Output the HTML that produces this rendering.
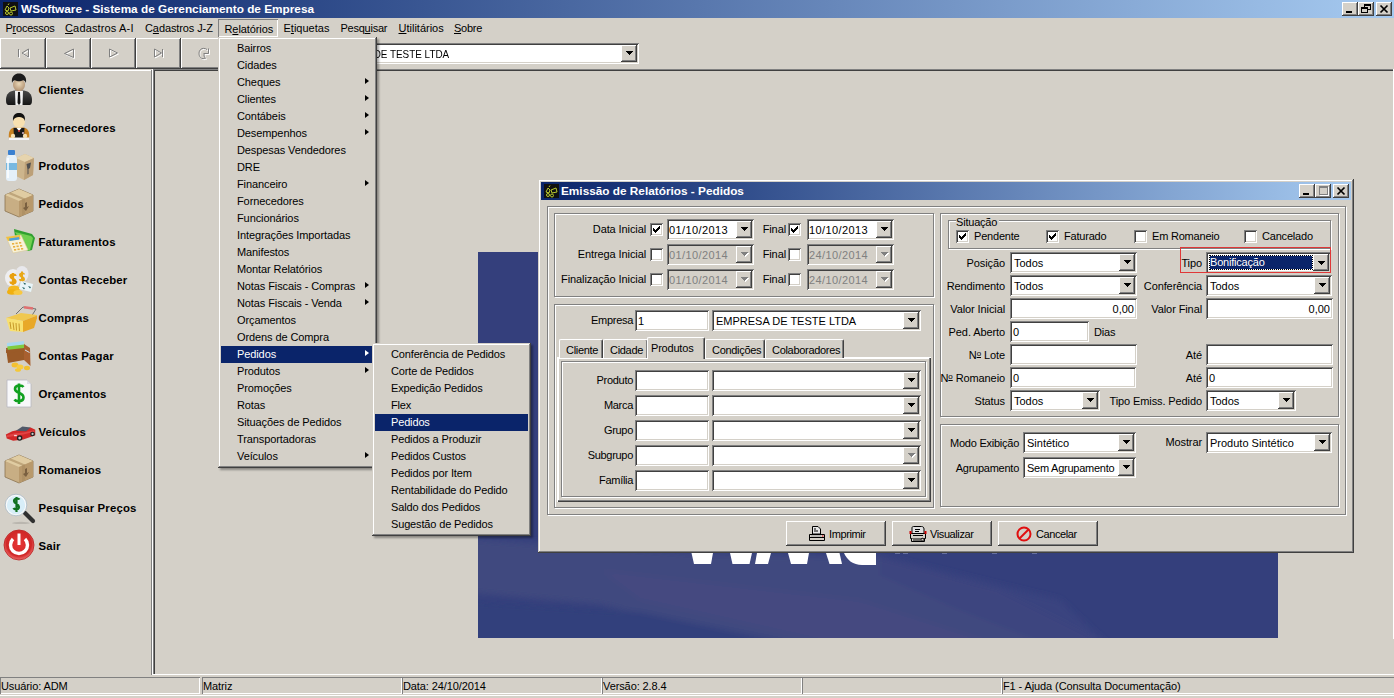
<!DOCTYPE html>
<html><head><meta charset="utf-8"><style>
html,body{margin:0;padding:0;width:1394px;height:698px;overflow:hidden;background:#D4D0C8}
body{position:relative;font-family:"Liberation Sans",sans-serif;font-size:11px;color:#000}
div,span,svg{position:absolute}
span{white-space:pre;line-height:13px}
u{text-decoration:underline;text-underline-offset:1px}
</style></head><body>
<div style="left:0px;top:0px;width:1394px;height:698px;background:#D4D0C8;"></div>
<div style="left:0px;top:0px;width:1394px;height:18px;background:linear-gradient(to right,#0A246A,#A6CAF0);"></div>
<div style="left:3px;top:2px;width:15px;height:14px"><svg width="15" height="14" viewBox="0 0 15 14"><rect width="15" height="14" fill="#101010"/><g fill="none" stroke="#B8C830" stroke-width="1"><path d="M2 8 L4 4 L6 6 L5 9 Z"/><path d="M7 6 L12 4 L13 8 L8 9 Z"/><circle cx="4" cy="11" r="1.5"/><circle cx="8" cy="11.5" r="1.5"/><path d="M5 3 L6 1.5"/></g></svg></div>
<span style="left:21px;top:3px;font-size:11.8px;font-weight:700;color:#fff;letter-spacing:0px;">WSoftware - Sistema de Gerenciamento de Empresa</span>
<div style="left:1342px;top:2px;width:16px;height:14px;background:#D4D0C8;box-shadow:inset -1px -1px #404040,inset 1px 1px #fff,inset -2px -2px #808080,inset 2px 2px #D4D0C8;"></div>
<div style="left:1346px;top:11px;width:6px;height:2px;background:#000;"></div>
<div style="left:1358px;top:2px;width:16px;height:14px;background:#D4D0C8;box-shadow:inset -1px -1px #404040,inset 1px 1px #fff,inset -2px -2px #808080,inset 2px 2px #D4D0C8;"></div>
<div style="left:1364px;top:4px;width:7px;height:6px;border:1px solid #000;border-top-width:2px;box-sizing:border-box"></div>
<div style="left:1361px;top:7px;width:7px;height:6px;border:1px solid #000;border-top-width:2px;box-sizing:border-box;background:#D4D0C8"></div>
<div style="left:1376px;top:2px;width:16px;height:14px;background:#D4D0C8;box-shadow:inset -1px -1px #404040,inset 1px 1px #fff,inset -2px -2px #808080,inset 2px 2px #D4D0C8;"></div>
<svg style="position:absolute;left:1376px;top:2px" width="16" height="14"><path d="M4.5 3.5 L11.5 10.5 M11.5 3.5 L4.5 10.5" stroke="#000" stroke-width="1.7"/></svg>
<div style="left:218px;top:19px;width:60px;height:18px;background:transparent;box-shadow:inset 1px 1px #808080,inset -1px -1px #fff;"></div>
<span style="left:5.5px;top:22px;font-size:11px;font-weight:400;color:#000;letter-spacing:-0.25px;">P<u>r</u>ocessos</span>
<span style="left:65px;top:22px;font-size:11px;font-weight:400;color:#000;letter-spacing:0.15px;"><u>C</u>adastros A-I</span>
<span style="left:145px;top:22px;font-size:11px;font-weight:400;color:#000;letter-spacing:-0.1px;">C<u>a</u>dastros J-Z</span>
<span style="left:224.5px;top:23px;font-size:11px;font-weight:400;color:#000;letter-spacing:-0.1px;">R<u>e</u>latórios</span>
<span style="left:283.5px;top:22px;font-size:11px;font-weight:400;color:#000;letter-spacing:0px;">E<u>t</u>iquetas</span>
<span style="left:340.5px;top:22px;font-size:11px;font-weight:400;color:#000;letter-spacing:-0.25px;">Pesq<u>u</u>isar</span>
<span style="left:398.5px;top:22px;font-size:11px;font-weight:400;color:#000;letter-spacing:0px;"><u>U</u>tilitários</span>
<span style="left:454px;top:22px;font-size:11px;font-weight:400;color:#000;letter-spacing:-0.25px;"><u>S</u>obre</span>
<div style="left:0px;top:38px;width:46px;height:31px;background:#D4D0C8;box-shadow:inset -1px -1px #404040,inset 1px 1px #fff,inset -2px -2px #808080,inset 2px 2px #D4D0C8;"></div>
<div style="left:46px;top:38px;width:45px;height:31px;background:#D4D0C8;box-shadow:inset -1px -1px #404040,inset 1px 1px #fff,inset -2px -2px #808080,inset 2px 2px #D4D0C8;"></div>
<div style="left:91px;top:38px;width:45px;height:31px;background:#D4D0C8;box-shadow:inset -1px -1px #404040,inset 1px 1px #fff,inset -2px -2px #808080,inset 2px 2px #D4D0C8;"></div>
<div style="left:136px;top:38px;width:45px;height:31px;background:#D4D0C8;box-shadow:inset -1px -1px #404040,inset 1px 1px #fff,inset -2px -2px #808080,inset 2px 2px #D4D0C8;"></div>
<div style="left:181px;top:38px;width:45px;height:31px;background:#D4D0C8;box-shadow:inset -1px -1px #404040,inset 1px 1px #fff,inset -2px -2px #808080,inset 2px 2px #D4D0C8;"></div>
<div style="left:305px;top:43px;width:334px;height:21px;background:#fff;box-shadow:inset 1px 1px #808080,inset -1px -1px #fff,inset 2px 2px #404040,inset -2px -2px #D4D0C8;"></div>
<div style="left:621px;top:45px;width:16px;height:17px;background:#D4D0C8;box-shadow:inset -1px -1px #404040,inset 1px 1px #fff,inset -2px -2px #808080,inset 2px 2px #D4D0C8;"></div>
<svg style="left:626px;top:51px" width="7" height="4" shape-rendering="crispEdges"><g fill="#000"><rect x="0" y="0" width="7" height="1"/><rect x="1" y="1" width="5" height="1"/><rect x="2" y="2" width="3" height="1"/><rect x="3" y="3" width="1" height="1"/></g></svg>
<span style="right:945px;top:48px;font-size:11px;font-weight:400;color:#000;letter-spacing:0px;transform:scaleX(0.9);transform-origin:right">EMPRESA DE TESTE LTDA</span>
<div style="left:0px;top:70px;width:151px;height:1px;background:#fff;"></div>
<div style="left:151px;top:70px;width:1px;height:605px;background:#808080;"></div>
<div style="left:152px;top:69px;width:1px;height:606px;background:#fff;"></div>
<div style="left:153px;top:69px;width:1241px;height:1px;background:#808080;"></div>
<div style="left:153px;top:69px;width:1px;height:605px;background:#808080;"></div>
<div style="left:154px;top:70px;width:1240px;height:1px;background:#404040;"></div>
<div style="left:154px;top:70px;width:1px;height:604px;background:#404040;"></div>
<div style="left:152px;top:674px;width:1242px;height:1px;background:#fff;"></div>
<div style="left:1393px;top:69px;width:1px;height:570px;background:#fff;"></div>
<span style="left:38.5px;top:84px;font-size:11.4px;font-weight:700;color:#000;letter-spacing:0.15px;">Clientes</span>
<span style="left:38.5px;top:122px;font-size:11.4px;font-weight:700;color:#000;letter-spacing:0.15px;">Fornecedores</span>
<span style="left:38.5px;top:160px;font-size:11.4px;font-weight:700;color:#000;letter-spacing:0.15px;">Produtos</span>
<span style="left:38.5px;top:198px;font-size:11.4px;font-weight:700;color:#000;letter-spacing:0.15px;">Pedidos</span>
<span style="left:38.5px;top:236px;font-size:11.4px;font-weight:700;color:#000;letter-spacing:0.15px;">Faturamentos</span>
<span style="left:38.5px;top:274px;font-size:11.4px;font-weight:700;color:#000;letter-spacing:0.15px;">Contas Receber</span>
<span style="left:38.5px;top:312px;font-size:11.4px;font-weight:700;color:#000;letter-spacing:0.15px;">Compras</span>
<span style="left:38.5px;top:350px;font-size:11.4px;font-weight:700;color:#000;letter-spacing:0.15px;">Contas Pagar</span>
<span style="left:38.5px;top:388px;font-size:11.4px;font-weight:700;color:#000;letter-spacing:0.15px;">Orçamentos</span>
<span style="left:38.5px;top:426px;font-size:11.4px;font-weight:700;color:#000;letter-spacing:0.15px;">Veículos</span>
<span style="left:38.5px;top:464px;font-size:11.4px;font-weight:700;color:#000;letter-spacing:0.15px;">Romaneios</span>
<span style="left:38.5px;top:502px;font-size:11.4px;font-weight:700;color:#000;letter-spacing:0.15px;">Pesquisar Preços</span>
<span style="left:38.5px;top:540px;font-size:11.4px;font-weight:700;color:#000;letter-spacing:0.15px;">Sair</span>
<svg style="left:478px;top:252px" width="800" height="386" viewBox="478 252 800 386"><defs><filter id="bl" x="-10%" y="-10%" width="120%" height="120%"><feGaussianBlur stdDeviation="3"/></filter><clipPath id="cp"><rect x="478" y="252" width="800" height="386"/></clipPath></defs><rect x="478" y="252" width="800" height="386" fill="#343F7C"/><g clip-path="url(#cp)"><g filter="url(#bl)"><path d="M460 538 L700 553 L880 556 L1000 590 L1110 645 L780 645 L600 605 L460 592 Z" fill="#41487F"/><path d="M600 570 L860 600 L1000 645 L840 645 L640 600 Z" fill="#474C80" opacity=".7"/><path d="M460 600 L640 612 L800 645 L460 645 Z" fill="#333F7C"/><path d="M880 556 L1060 600 L1108 645 L1050 645 L960 610 L880 575 Z" fill="#3B4380" opacity=".8"/></g></g></svg>
<div style="left:0px;top:677px;width:200px;height:17px;background:transparent;box-shadow:inset 1px 1px #808080,inset -1px -1px #fff;"></div>
<span style="left:1px;top:680px;font-size:11px;font-weight:400;color:#000;letter-spacing:-0.1px;">Usuário: ADM</span>
<div style="left:202px;top:677px;width:200px;height:17px;background:transparent;box-shadow:inset 1px 1px #808080,inset -1px -1px #fff;"></div>
<span style="left:203px;top:680px;font-size:11px;font-weight:400;color:#000;letter-spacing:-0.1px;">Matriz</span>
<div style="left:402px;top:677px;width:200px;height:17px;background:transparent;box-shadow:inset 1px 1px #808080,inset -1px -1px #fff;"></div>
<span style="left:403px;top:680px;font-size:11px;font-weight:400;color:#000;letter-spacing:-0.1px;">Data: 24/10/2014</span>
<div style="left:602px;top:677px;width:200px;height:17px;background:transparent;box-shadow:inset 1px 1px #808080,inset -1px -1px #fff;"></div>
<span style="left:603px;top:680px;font-size:11px;font-weight:400;color:#000;letter-spacing:-0.1px;">Versão: 2.8.4</span>
<div style="left:802px;top:677px;width:200px;height:17px;background:transparent;box-shadow:inset 1px 1px #808080,inset -1px -1px #fff;"></div>
<div style="left:1002px;top:677px;width:393px;height:17px;background:transparent;box-shadow:inset 1px 1px #808080,inset -1px -1px #fff;"></div>
<span style="left:1003px;top:680px;font-size:11px;font-weight:400;color:#000;letter-spacing:-0.1px;">F1 - Ajuda (Consulta Documentação)</span>
<div style="left:0px;top:695px;width:1394px;height:1px;background:#fff;"></div>
<div style="left:538px;top:179px;width:816px;height:374px;background:#D4D0C8;box-shadow:inset -1px -1px #404040,inset 1px 1px #D4D0C8,inset -2px -2px #808080,inset 2px 2px #fff;"></div>
<div style="left:541px;top:182px;width:810px;height:18px;background:linear-gradient(to right,#0A246A,#A6CAF0);"></div>
<div style="left:544px;top:184px;width:15px;height:14px"><svg width="15" height="14" viewBox="0 0 15 14"><rect width="15" height="14" fill="#101010"/><g fill="none" stroke="#B8C830" stroke-width="1"><path d="M2 8 L4 4 L6 6 L5 9 Z"/><path d="M7 6 L12 4 L13 8 L8 9 Z"/><circle cx="4" cy="11" r="1.5"/><circle cx="8" cy="11.5" r="1.5"/><path d="M5 3 L6 1.5"/></g></svg></div>
<span style="left:561px;top:185px;font-size:11.8px;font-weight:700;color:#fff;letter-spacing:0px;">Emissão de Relatórios - Pedidos</span>
<div style="left:1299px;top:184px;width:16px;height:14px;background:#D4D0C8;box-shadow:inset -1px -1px #404040,inset 1px 1px #fff,inset -2px -2px #808080,inset 2px 2px #D4D0C8;"></div>
<div style="left:1303px;top:193px;width:6px;height:2px;background:#000;"></div>
<div style="left:1315px;top:184px;width:16px;height:14px;background:#D4D0C8;box-shadow:inset -1px -1px #404040,inset 1px 1px #fff,inset -2px -2px #808080,inset 2px 2px #D4D0C8;"></div>
<div style="left:1319px;top:186px;width:9px;height:9px;border:1px solid #808080;border-top-width:2px;box-sizing:border-box;box-shadow:1px 1px #fff"></div>
<div style="left:1333px;top:184px;width:16px;height:14px;background:#D4D0C8;box-shadow:inset -1px -1px #404040,inset 1px 1px #fff,inset -2px -2px #808080,inset 2px 2px #D4D0C8;"></div>
<svg style="position:absolute;left:1333px;top:184px" width="16" height="14"><path d="M4.5 3.5 L11.5 10.5 M11.5 3.5 L4.5 10.5" stroke="#000" stroke-width="1.7"/></svg>
<div style="left:548px;top:207px;width:799px;height:309px;border:1px solid #fff;box-sizing:border-box"></div>
<div style="left:547px;top:206px;width:799px;height:309px;border:1px solid #808080;box-sizing:border-box"></div>
<div style="left:555px;top:214px;width:380px;height:84px;border:1px solid #fff;box-sizing:border-box"></div>
<div style="left:554px;top:213px;width:380px;height:84px;border:1px solid #808080;box-sizing:border-box"></div>
<span style="right:748px;top:223px;font-size:11px;font-weight:400;color:#000;letter-spacing:-0.1px;">Data Inicial</span>
<div style="left:650px;top:223px;width:13px;height:13px;background:#fff;box-shadow:inset 1px 1px #808080,inset -1px -1px #fff,inset 2px 2px #404040,inset -2px -2px #D4D0C8"><svg width="13" height="13" style="position:absolute;left:0;top:0" shape-rendering="crispEdges"><g fill="#000"><rect x="9" y="3" width="1" height="1"/><rect x="8" y="4" width="1" height="1"/><rect x="9" y="4" width="1" height="1"/><rect x="3" y="5" width="1" height="1"/><rect x="7" y="5" width="1" height="1"/><rect x="8" y="5" width="1" height="1"/><rect x="9" y="5" width="1" height="1"/><rect x="3" y="6" width="1" height="1"/><rect x="4" y="6" width="1" height="1"/><rect x="6" y="6" width="1" height="1"/><rect x="7" y="6" width="1" height="1"/><rect x="8" y="6" width="1" height="1"/><rect x="3" y="7" width="1" height="1"/><rect x="4" y="7" width="1" height="1"/><rect x="5" y="7" width="1" height="1"/><rect x="6" y="7" width="1" height="1"/><rect x="7" y="7" width="1" height="1"/><rect x="4" y="8" width="1" height="1"/><rect x="5" y="8" width="1" height="1"/><rect x="6" y="8" width="1" height="1"/><rect x="5" y="9" width="1" height="1"/></g></svg></div>
<div style="left:667px;top:219px;width:87px;height:21px;background:#fff;box-shadow:inset 1px 1px #808080,inset -1px -1px #fff,inset 2px 2px #404040,inset -2px -2px #D4D0C8;"></div>
<div style="left:736px;top:221px;width:16px;height:17px;background:#D4D0C8;box-shadow:inset -1px -1px #404040,inset 1px 1px #fff,inset -2px -2px #808080,inset 2px 2px #D4D0C8;"></div>
<svg style="left:741px;top:227px" width="7" height="4" shape-rendering="crispEdges"><g fill="#000"><rect x="0" y="0" width="7" height="1"/><rect x="1" y="1" width="5" height="1"/><rect x="2" y="2" width="3" height="1"/><rect x="3" y="3" width="1" height="1"/></g></svg>
<span style="left:669px;top:224px;font-size:11px;font-weight:400;color:#000;letter-spacing:0.4px;">01/10/2013</span>
<span style="right:608px;top:223px;font-size:11px;font-weight:400;color:#000;letter-spacing:-0.1px;">Final</span>
<div style="left:788px;top:223px;width:13px;height:13px;background:#fff;box-shadow:inset 1px 1px #808080,inset -1px -1px #fff,inset 2px 2px #404040,inset -2px -2px #D4D0C8"><svg width="13" height="13" style="position:absolute;left:0;top:0" shape-rendering="crispEdges"><g fill="#000"><rect x="9" y="3" width="1" height="1"/><rect x="8" y="4" width="1" height="1"/><rect x="9" y="4" width="1" height="1"/><rect x="3" y="5" width="1" height="1"/><rect x="7" y="5" width="1" height="1"/><rect x="8" y="5" width="1" height="1"/><rect x="9" y="5" width="1" height="1"/><rect x="3" y="6" width="1" height="1"/><rect x="4" y="6" width="1" height="1"/><rect x="6" y="6" width="1" height="1"/><rect x="7" y="6" width="1" height="1"/><rect x="8" y="6" width="1" height="1"/><rect x="3" y="7" width="1" height="1"/><rect x="4" y="7" width="1" height="1"/><rect x="5" y="7" width="1" height="1"/><rect x="6" y="7" width="1" height="1"/><rect x="7" y="7" width="1" height="1"/><rect x="4" y="8" width="1" height="1"/><rect x="5" y="8" width="1" height="1"/><rect x="6" y="8" width="1" height="1"/><rect x="5" y="9" width="1" height="1"/></g></svg></div>
<div style="left:807px;top:219px;width:87px;height:21px;background:#fff;box-shadow:inset 1px 1px #808080,inset -1px -1px #fff,inset 2px 2px #404040,inset -2px -2px #D4D0C8;"></div>
<div style="left:876px;top:221px;width:16px;height:17px;background:#D4D0C8;box-shadow:inset -1px -1px #404040,inset 1px 1px #fff,inset -2px -2px #808080,inset 2px 2px #D4D0C8;"></div>
<svg style="left:881px;top:227px" width="7" height="4" shape-rendering="crispEdges"><g fill="#000"><rect x="0" y="0" width="7" height="1"/><rect x="1" y="1" width="5" height="1"/><rect x="2" y="2" width="3" height="1"/><rect x="3" y="3" width="1" height="1"/></g></svg>
<span style="left:809px;top:224px;font-size:11px;font-weight:400;color:#000;letter-spacing:0.4px;">10/10/2013</span>
<span style="right:748px;top:248px;font-size:11px;font-weight:400;color:#000;letter-spacing:-0.1px;">Entrega Inicial</span>
<div style="left:650px;top:248px;width:13px;height:13px;background:#fff;box-shadow:inset 1px 1px #808080,inset -1px -1px #fff,inset 2px 2px #404040,inset -2px -2px #D4D0C8"></div>
<div style="left:667px;top:244px;width:87px;height:21px;background:#D4D0C8;box-shadow:inset 1px 1px #808080,inset -1px -1px #fff,inset 2px 2px #404040,inset -2px -2px #D4D0C8;"></div>
<div style="left:736px;top:246px;width:16px;height:17px;background:#D4D0C8;box-shadow:inset -1px -1px #404040,inset 1px 1px #fff,inset -2px -2px #808080,inset 2px 2px #D4D0C8;"></div>
<svg style="left:742px;top:253px" width="7" height="4" shape-rendering="crispEdges"><g fill="#fff"><rect x="0" y="0" width="7" height="1"/><rect x="1" y="1" width="5" height="1"/><rect x="2" y="2" width="3" height="1"/><rect x="3" y="3" width="1" height="1"/></g></svg>
<svg style="left:741px;top:252px" width="7" height="4" shape-rendering="crispEdges"><g fill="#808080"><rect x="0" y="0" width="7" height="1"/><rect x="1" y="1" width="5" height="1"/><rect x="2" y="2" width="3" height="1"/><rect x="3" y="3" width="1" height="1"/></g></svg>
<span style="left:669px;top:249px;font-size:11px;font-weight:400;color:#808080;letter-spacing:0.4px;">01/10/2014</span>
<span style="right:608px;top:248px;font-size:11px;font-weight:400;color:#000;letter-spacing:-0.1px;">Final</span>
<div style="left:788px;top:248px;width:13px;height:13px;background:#fff;box-shadow:inset 1px 1px #808080,inset -1px -1px #fff,inset 2px 2px #404040,inset -2px -2px #D4D0C8"></div>
<div style="left:807px;top:244px;width:87px;height:21px;background:#D4D0C8;box-shadow:inset 1px 1px #808080,inset -1px -1px #fff,inset 2px 2px #404040,inset -2px -2px #D4D0C8;"></div>
<div style="left:876px;top:246px;width:16px;height:17px;background:#D4D0C8;box-shadow:inset -1px -1px #404040,inset 1px 1px #fff,inset -2px -2px #808080,inset 2px 2px #D4D0C8;"></div>
<svg style="left:882px;top:253px" width="7" height="4" shape-rendering="crispEdges"><g fill="#fff"><rect x="0" y="0" width="7" height="1"/><rect x="1" y="1" width="5" height="1"/><rect x="2" y="2" width="3" height="1"/><rect x="3" y="3" width="1" height="1"/></g></svg>
<svg style="left:881px;top:252px" width="7" height="4" shape-rendering="crispEdges"><g fill="#808080"><rect x="0" y="0" width="7" height="1"/><rect x="1" y="1" width="5" height="1"/><rect x="2" y="2" width="3" height="1"/><rect x="3" y="3" width="1" height="1"/></g></svg>
<span style="left:809px;top:249px;font-size:11px;font-weight:400;color:#808080;letter-spacing:0.4px;">24/10/2014</span>
<span style="right:748px;top:273px;font-size:11px;font-weight:400;color:#000;letter-spacing:-0.1px;">Finalização Inicial</span>
<div style="left:650px;top:273px;width:13px;height:13px;background:#fff;box-shadow:inset 1px 1px #808080,inset -1px -1px #fff,inset 2px 2px #404040,inset -2px -2px #D4D0C8"></div>
<div style="left:667px;top:269px;width:87px;height:21px;background:#D4D0C8;box-shadow:inset 1px 1px #808080,inset -1px -1px #fff,inset 2px 2px #404040,inset -2px -2px #D4D0C8;"></div>
<div style="left:736px;top:271px;width:16px;height:17px;background:#D4D0C8;box-shadow:inset -1px -1px #404040,inset 1px 1px #fff,inset -2px -2px #808080,inset 2px 2px #D4D0C8;"></div>
<svg style="left:742px;top:278px" width="7" height="4" shape-rendering="crispEdges"><g fill="#fff"><rect x="0" y="0" width="7" height="1"/><rect x="1" y="1" width="5" height="1"/><rect x="2" y="2" width="3" height="1"/><rect x="3" y="3" width="1" height="1"/></g></svg>
<svg style="left:741px;top:277px" width="7" height="4" shape-rendering="crispEdges"><g fill="#808080"><rect x="0" y="0" width="7" height="1"/><rect x="1" y="1" width="5" height="1"/><rect x="2" y="2" width="3" height="1"/><rect x="3" y="3" width="1" height="1"/></g></svg>
<span style="left:669px;top:274px;font-size:11px;font-weight:400;color:#808080;letter-spacing:0.4px;">01/10/2014</span>
<span style="right:608px;top:273px;font-size:11px;font-weight:400;color:#000;letter-spacing:-0.1px;">Final</span>
<div style="left:788px;top:273px;width:13px;height:13px;background:#fff;box-shadow:inset 1px 1px #808080,inset -1px -1px #fff,inset 2px 2px #404040,inset -2px -2px #D4D0C8"></div>
<div style="left:807px;top:269px;width:87px;height:21px;background:#D4D0C8;box-shadow:inset 1px 1px #808080,inset -1px -1px #fff,inset 2px 2px #404040,inset -2px -2px #D4D0C8;"></div>
<div style="left:876px;top:271px;width:16px;height:17px;background:#D4D0C8;box-shadow:inset -1px -1px #404040,inset 1px 1px #fff,inset -2px -2px #808080,inset 2px 2px #D4D0C8;"></div>
<svg style="left:882px;top:278px" width="7" height="4" shape-rendering="crispEdges"><g fill="#fff"><rect x="0" y="0" width="7" height="1"/><rect x="1" y="1" width="5" height="1"/><rect x="2" y="2" width="3" height="1"/><rect x="3" y="3" width="1" height="1"/></g></svg>
<svg style="left:881px;top:277px" width="7" height="4" shape-rendering="crispEdges"><g fill="#808080"><rect x="0" y="0" width="7" height="1"/><rect x="1" y="1" width="5" height="1"/><rect x="2" y="2" width="3" height="1"/><rect x="3" y="3" width="1" height="1"/></g></svg>
<span style="left:809px;top:274px;font-size:11px;font-weight:400;color:#808080;letter-spacing:0.4px;">24/10/2014</span>
<div style="left:555px;top:305px;width:380px;height:204px;border:1px solid #fff;box-sizing:border-box"></div>
<div style="left:554px;top:304px;width:380px;height:204px;border:1px solid #808080;box-sizing:border-box"></div>
<span style="right:761px;top:314px;font-size:11px;font-weight:400;color:#000;letter-spacing:-0.3px;">Empresa</span>
<div style="left:635px;top:310px;width:74px;height:21px;background:#fff;box-shadow:inset 1px 1px #808080,inset -1px -1px #fff,inset 2px 2px #404040,inset -2px -2px #D4D0C8;"></div>
<span style="left:638px;top:315px;font-size:11px;font-weight:400;color:#000;letter-spacing:0px;">1</span>
<div style="left:712px;top:310px;width:209px;height:21px;background:#fff;box-shadow:inset 1px 1px #808080,inset -1px -1px #fff,inset 2px 2px #404040,inset -2px -2px #D4D0C8;"></div>
<span style="left:716px;top:315px;font-size:11px;font-weight:400;color:#000;letter-spacing:0px;">EMPRESA DE TESTE LTDA</span>
<div style="left:903px;top:312px;width:16px;height:17px;background:#D4D0C8;box-shadow:inset -1px -1px #404040,inset 1px 1px #fff,inset -2px -2px #808080,inset 2px 2px #D4D0C8;"></div>
<svg style="left:908px;top:318px" width="7" height="4" shape-rendering="crispEdges"><g fill="#000"><rect x="0" y="0" width="7" height="1"/><rect x="1" y="1" width="5" height="1"/><rect x="2" y="2" width="3" height="1"/><rect x="3" y="3" width="1" height="1"/></g></svg>
<div style="left:557px;top:357px;width:374px;height:145px;background:#D4D0C8;box-shadow:inset -1px -1px #404040,inset 1px 1px #D4D0C8,inset -2px -2px #808080,inset 2px 2px #fff;"></div>
<div style="left:557px;top:357px;width:374px;height:145px;box-shadow:inset 1px 1px #fff,inset -1px -1px #404040,inset -2px -2px #808080"></div>
<div style="left:562px;top:362px;width:365px;height:136px;border:1px solid #fff;box-sizing:border-box"></div>
<div style="left:561px;top:361px;width:365px;height:136px;border:1px solid #808080;box-sizing:border-box"></div>
<div style="left:559px;top:339px;width:44px;height:19px;background:#D4D0C8;border-left:1px solid #fff;border-top:1px solid #fff;border-right:1px solid #404040;box-shadow:inset -1px 0 #808080;border-radius:2px 2px 0 0;box-sizing:border-box"></div>
<span style="left:566px;top:344px;font-size:11px;font-weight:400;color:#000;letter-spacing:-0.3px;">Cliente</span>
<div style="left:603px;top:339px;width:45px;height:19px;background:#D4D0C8;border-left:1px solid #fff;border-top:1px solid #fff;border-right:1px solid #404040;box-shadow:inset -1px 0 #808080;border-radius:2px 2px 0 0;box-sizing:border-box"></div>
<span style="left:610px;top:344px;font-size:11px;font-weight:400;color:#000;letter-spacing:-0.3px;">Cidade</span>
<div style="left:705px;top:339px;width:60px;height:19px;background:#D4D0C8;border-left:1px solid #fff;border-top:1px solid #fff;border-right:1px solid #404040;box-shadow:inset -1px 0 #808080;border-radius:2px 2px 0 0;box-sizing:border-box"></div>
<span style="left:712px;top:344px;font-size:11px;font-weight:400;color:#000;letter-spacing:-0.3px;">Condições</span>
<div style="left:765px;top:339px;width:79px;height:19px;background:#D4D0C8;border-left:1px solid #fff;border-top:1px solid #fff;border-right:1px solid #404040;box-shadow:inset -1px 0 #808080;border-radius:2px 2px 0 0;box-sizing:border-box"></div>
<span style="left:772px;top:344px;font-size:11px;font-weight:400;color:#000;letter-spacing:-0.3px;">Colaboradores</span>
<div style="left:647px;top:337px;width:58px;height:22px;background:#D4D0C8;border-left:1px solid #fff;border-top:1px solid #fff;border-right:1px solid #404040;box-shadow:inset -1px 0 #808080;border-radius:2px 2px 0 0;box-sizing:border-box"></div>
<span style="left:651px;top:342px;font-size:11px;font-weight:400;color:#000;letter-spacing:-0.2px;">Produtos</span>
<div style="left:648px;top:357px;width:55px;height:2px;background:#D4D0C8;"></div>
<span style="right:761px;top:374px;font-size:11px;font-weight:400;color:#000;letter-spacing:-0.3px;">Produto</span>
<div style="left:635px;top:370px;width:74px;height:21px;background:#fff;box-shadow:inset 1px 1px #808080,inset -1px -1px #fff,inset 2px 2px #404040,inset -2px -2px #D4D0C8;"></div>
<div style="left:712px;top:370px;width:209px;height:21px;background:#fff;box-shadow:inset 1px 1px #808080,inset -1px -1px #fff,inset 2px 2px #404040,inset -2px -2px #D4D0C8;"></div>
<div style="left:903px;top:372px;width:16px;height:17px;background:#D4D0C8;box-shadow:inset -1px -1px #404040,inset 1px 1px #fff,inset -2px -2px #808080,inset 2px 2px #D4D0C8;"></div>
<svg style="left:908px;top:378px" width="7" height="4" shape-rendering="crispEdges"><g fill="#000"><rect x="0" y="0" width="7" height="1"/><rect x="1" y="1" width="5" height="1"/><rect x="2" y="2" width="3" height="1"/><rect x="3" y="3" width="1" height="1"/></g></svg>
<span style="right:761px;top:399px;font-size:11px;font-weight:400;color:#000;letter-spacing:-0.3px;">Marca</span>
<div style="left:635px;top:395px;width:74px;height:21px;background:#fff;box-shadow:inset 1px 1px #808080,inset -1px -1px #fff,inset 2px 2px #404040,inset -2px -2px #D4D0C8;"></div>
<div style="left:712px;top:395px;width:209px;height:21px;background:#fff;box-shadow:inset 1px 1px #808080,inset -1px -1px #fff,inset 2px 2px #404040,inset -2px -2px #D4D0C8;"></div>
<div style="left:903px;top:397px;width:16px;height:17px;background:#D4D0C8;box-shadow:inset -1px -1px #404040,inset 1px 1px #fff,inset -2px -2px #808080,inset 2px 2px #D4D0C8;"></div>
<svg style="left:908px;top:403px" width="7" height="4" shape-rendering="crispEdges"><g fill="#000"><rect x="0" y="0" width="7" height="1"/><rect x="1" y="1" width="5" height="1"/><rect x="2" y="2" width="3" height="1"/><rect x="3" y="3" width="1" height="1"/></g></svg>
<span style="right:761px;top:424px;font-size:11px;font-weight:400;color:#000;letter-spacing:-0.3px;">Grupo</span>
<div style="left:635px;top:420px;width:74px;height:21px;background:#fff;box-shadow:inset 1px 1px #808080,inset -1px -1px #fff,inset 2px 2px #404040,inset -2px -2px #D4D0C8;"></div>
<div style="left:712px;top:420px;width:209px;height:21px;background:#fff;box-shadow:inset 1px 1px #808080,inset -1px -1px #fff,inset 2px 2px #404040,inset -2px -2px #D4D0C8;"></div>
<div style="left:903px;top:422px;width:16px;height:17px;background:#D4D0C8;box-shadow:inset -1px -1px #404040,inset 1px 1px #fff,inset -2px -2px #808080,inset 2px 2px #D4D0C8;"></div>
<svg style="left:908px;top:428px" width="7" height="4" shape-rendering="crispEdges"><g fill="#000"><rect x="0" y="0" width="7" height="1"/><rect x="1" y="1" width="5" height="1"/><rect x="2" y="2" width="3" height="1"/><rect x="3" y="3" width="1" height="1"/></g></svg>
<span style="right:761px;top:449px;font-size:11px;font-weight:400;color:#000;letter-spacing:-0.3px;">Subgrupo</span>
<div style="left:635px;top:445px;width:74px;height:21px;background:#fff;box-shadow:inset 1px 1px #808080,inset -1px -1px #fff,inset 2px 2px #404040,inset -2px -2px #D4D0C8;"></div>
<div style="left:712px;top:445px;width:209px;height:21px;background:#fff;box-shadow:inset 1px 1px #808080,inset -1px -1px #fff,inset 2px 2px #404040,inset -2px -2px #D4D0C8;"></div>
<div style="left:903px;top:447px;width:16px;height:17px;background:#D4D0C8;box-shadow:inset -1px -1px #404040,inset 1px 1px #fff,inset -2px -2px #808080,inset 2px 2px #D4D0C8;"></div>
<svg style="left:909px;top:454px" width="7" height="4" shape-rendering="crispEdges"><g fill="#fff"><rect x="0" y="0" width="7" height="1"/><rect x="1" y="1" width="5" height="1"/><rect x="2" y="2" width="3" height="1"/><rect x="3" y="3" width="1" height="1"/></g></svg>
<svg style="left:908px;top:453px" width="7" height="4" shape-rendering="crispEdges"><g fill="#808080"><rect x="0" y="0" width="7" height="1"/><rect x="1" y="1" width="5" height="1"/><rect x="2" y="2" width="3" height="1"/><rect x="3" y="3" width="1" height="1"/></g></svg>
<span style="right:761px;top:474px;font-size:11px;font-weight:400;color:#000;letter-spacing:-0.3px;">Família</span>
<div style="left:635px;top:470px;width:74px;height:21px;background:#fff;box-shadow:inset 1px 1px #808080,inset -1px -1px #fff,inset 2px 2px #404040,inset -2px -2px #D4D0C8;"></div>
<div style="left:712px;top:470px;width:209px;height:21px;background:#fff;box-shadow:inset 1px 1px #808080,inset -1px -1px #fff,inset 2px 2px #404040,inset -2px -2px #D4D0C8;"></div>
<div style="left:903px;top:472px;width:16px;height:17px;background:#D4D0C8;box-shadow:inset -1px -1px #404040,inset 1px 1px #fff,inset -2px -2px #808080,inset 2px 2px #D4D0C8;"></div>
<svg style="left:908px;top:478px" width="7" height="4" shape-rendering="crispEdges"><g fill="#000"><rect x="0" y="0" width="7" height="1"/><rect x="1" y="1" width="5" height="1"/><rect x="2" y="2" width="3" height="1"/><rect x="3" y="3" width="1" height="1"/></g></svg>
<div style="left:941px;top:214px;width:399px;height:204px;border:1px solid #fff;box-sizing:border-box"></div>
<div style="left:940px;top:213px;width:399px;height:204px;border:1px solid #808080;box-sizing:border-box"></div>
<div style="left:949px;top:221px;width:383px;height:29px;border:1px solid #fff;box-sizing:border-box"></div>
<div style="left:948px;top:220px;width:383px;height:29px;border:1px solid #808080;box-sizing:border-box"></div>
<div style="left:956px;top:215px;width:43px;height:12px;background:#D4D0C8;"></div>
<span style="left:956px;top:216px;font-size:11px;font-weight:400;color:#000;letter-spacing:-0.2px;">Situação</span>
<div style="left:956px;top:230px;width:13px;height:13px;background:#fff;box-shadow:inset 1px 1px #808080,inset -1px -1px #fff,inset 2px 2px #404040,inset -2px -2px #D4D0C8"><svg width="13" height="13" style="position:absolute;left:0;top:0" shape-rendering="crispEdges"><g fill="#000"><rect x="9" y="3" width="1" height="1"/><rect x="8" y="4" width="1" height="1"/><rect x="9" y="4" width="1" height="1"/><rect x="3" y="5" width="1" height="1"/><rect x="7" y="5" width="1" height="1"/><rect x="8" y="5" width="1" height="1"/><rect x="9" y="5" width="1" height="1"/><rect x="3" y="6" width="1" height="1"/><rect x="4" y="6" width="1" height="1"/><rect x="6" y="6" width="1" height="1"/><rect x="7" y="6" width="1" height="1"/><rect x="8" y="6" width="1" height="1"/><rect x="3" y="7" width="1" height="1"/><rect x="4" y="7" width="1" height="1"/><rect x="5" y="7" width="1" height="1"/><rect x="6" y="7" width="1" height="1"/><rect x="7" y="7" width="1" height="1"/><rect x="4" y="8" width="1" height="1"/><rect x="5" y="8" width="1" height="1"/><rect x="6" y="8" width="1" height="1"/><rect x="5" y="9" width="1" height="1"/></g></svg></div>
<span style="left:974px;top:230px;font-size:11px;font-weight:400;color:#000;letter-spacing:-0.2px;">Pendente</span>
<div style="left:1046px;top:230px;width:13px;height:13px;background:#fff;box-shadow:inset 1px 1px #808080,inset -1px -1px #fff,inset 2px 2px #404040,inset -2px -2px #D4D0C8"><svg width="13" height="13" style="position:absolute;left:0;top:0" shape-rendering="crispEdges"><g fill="#000"><rect x="9" y="3" width="1" height="1"/><rect x="8" y="4" width="1" height="1"/><rect x="9" y="4" width="1" height="1"/><rect x="3" y="5" width="1" height="1"/><rect x="7" y="5" width="1" height="1"/><rect x="8" y="5" width="1" height="1"/><rect x="9" y="5" width="1" height="1"/><rect x="3" y="6" width="1" height="1"/><rect x="4" y="6" width="1" height="1"/><rect x="6" y="6" width="1" height="1"/><rect x="7" y="6" width="1" height="1"/><rect x="8" y="6" width="1" height="1"/><rect x="3" y="7" width="1" height="1"/><rect x="4" y="7" width="1" height="1"/><rect x="5" y="7" width="1" height="1"/><rect x="6" y="7" width="1" height="1"/><rect x="7" y="7" width="1" height="1"/><rect x="4" y="8" width="1" height="1"/><rect x="5" y="8" width="1" height="1"/><rect x="6" y="8" width="1" height="1"/><rect x="5" y="9" width="1" height="1"/></g></svg></div>
<span style="left:1064px;top:230px;font-size:11px;font-weight:400;color:#000;letter-spacing:-0.2px;">Faturado</span>
<div style="left:1134px;top:230px;width:13px;height:13px;background:#fff;box-shadow:inset 1px 1px #808080,inset -1px -1px #fff,inset 2px 2px #404040,inset -2px -2px #D4D0C8"></div>
<span style="left:1152px;top:230px;font-size:11px;font-weight:400;color:#000;letter-spacing:-0.2px;">Em Romaneio</span>
<div style="left:1244px;top:230px;width:13px;height:13px;background:#fff;box-shadow:inset 1px 1px #808080,inset -1px -1px #fff,inset 2px 2px #404040,inset -2px -2px #D4D0C8"></div>
<span style="left:1262px;top:230px;font-size:11px;font-weight:400;color:#000;letter-spacing:-0.2px;">Cancelado</span>
<span style="right:389px;top:257px;font-size:11px;font-weight:400;color:#000;letter-spacing:-0.1px;">Posição</span>
<div style="left:1010px;top:252px;width:127px;height:21px;background:#fff;box-shadow:inset 1px 1px #808080,inset -1px -1px #fff,inset 2px 2px #404040,inset -2px -2px #D4D0C8;"></div>
<span style="left:1014px;top:257px;font-size:11px;font-weight:400;color:#000;letter-spacing:0px;">Todos</span>
<div style="left:1119px;top:254px;width:16px;height:17px;background:#D4D0C8;box-shadow:inset -1px -1px #404040,inset 1px 1px #fff,inset -2px -2px #808080,inset 2px 2px #D4D0C8;"></div>
<svg style="left:1124px;top:260px" width="7" height="4" shape-rendering="crispEdges"><g fill="#000"><rect x="0" y="0" width="7" height="1"/><rect x="1" y="1" width="5" height="1"/><rect x="2" y="2" width="3" height="1"/><rect x="3" y="3" width="1" height="1"/></g></svg>
<span style="right:389px;top:280px;font-size:11px;font-weight:400;color:#000;letter-spacing:-0.1px;">Rendimento</span>
<div style="left:1010px;top:275px;width:127px;height:21px;background:#fff;box-shadow:inset 1px 1px #808080,inset -1px -1px #fff,inset 2px 2px #404040,inset -2px -2px #D4D0C8;"></div>
<span style="left:1014px;top:280px;font-size:11px;font-weight:400;color:#000;letter-spacing:0px;">Todos</span>
<div style="left:1119px;top:277px;width:16px;height:17px;background:#D4D0C8;box-shadow:inset -1px -1px #404040,inset 1px 1px #fff,inset -2px -2px #808080,inset 2px 2px #D4D0C8;"></div>
<svg style="left:1124px;top:283px" width="7" height="4" shape-rendering="crispEdges"><g fill="#000"><rect x="0" y="0" width="7" height="1"/><rect x="1" y="1" width="5" height="1"/><rect x="2" y="2" width="3" height="1"/><rect x="3" y="3" width="1" height="1"/></g></svg>
<span style="right:389px;top:303px;font-size:11px;font-weight:400;color:#000;letter-spacing:-0.1px;">Valor Inicial</span>
<div style="left:1010px;top:298px;width:127px;height:21px;background:#fff;box-shadow:inset 1px 1px #808080,inset -1px -1px #fff,inset 2px 2px #404040,inset -2px -2px #D4D0C8;"></div>
<span style="right:260px;top:303px;font-size:11px;font-weight:400;color:#000;letter-spacing:0px;">0,00</span>
<span style="right:389px;top:326px;font-size:11px;font-weight:400;color:#000;letter-spacing:-0.1px;">Ped. Aberto</span>
<div style="left:1010px;top:321px;width:79px;height:21px;background:#fff;box-shadow:inset 1px 1px #808080,inset -1px -1px #fff,inset 2px 2px #404040,inset -2px -2px #D4D0C8;"></div>
<span style="left:1013px;top:326px;font-size:11px;font-weight:400;color:#000;letter-spacing:0px;">0</span>
<span style="left:1094px;top:326px;font-size:11px;font-weight:400;color:#000;letter-spacing:-0.2px;">Dias</span>
<span style="right:389px;top:349px;font-size:11px;font-weight:400;color:#000;letter-spacing:-0.1px;">N<span style="position:static;font-size:8px;line-height:0;vertical-align:3px;text-decoration:underline;text-underline-offset:1px">o</span> Lote</span>
<div style="left:1010px;top:344px;width:127px;height:21px;background:#fff;box-shadow:inset 1px 1px #808080,inset -1px -1px #fff,inset 2px 2px #404040,inset -2px -2px #D4D0C8;"></div>
<span style="right:389px;top:372px;font-size:11px;font-weight:400;color:#000;letter-spacing:-0.1px;">N<span style="position:static;font-size:8px;line-height:0;vertical-align:3px;text-decoration:underline;text-underline-offset:1px">o</span> Romaneio</span>
<div style="left:1010px;top:367px;width:126px;height:21px;background:#fff;box-shadow:inset 1px 1px #808080,inset -1px -1px #fff,inset 2px 2px #404040,inset -2px -2px #D4D0C8;"></div>
<span style="left:1013px;top:372px;font-size:11px;font-weight:400;color:#000;letter-spacing:0px;">0</span>
<span style="right:389px;top:395px;font-size:11px;font-weight:400;color:#000;letter-spacing:-0.1px;">Status</span>
<div style="left:1010px;top:390px;width:90px;height:21px;background:#fff;box-shadow:inset 1px 1px #808080,inset -1px -1px #fff,inset 2px 2px #404040,inset -2px -2px #D4D0C8;"></div>
<span style="left:1014px;top:395px;font-size:11px;font-weight:400;color:#000;letter-spacing:0px;">Todos</span>
<div style="left:1082px;top:392px;width:16px;height:17px;background:#D4D0C8;box-shadow:inset -1px -1px #404040,inset 1px 1px #fff,inset -2px -2px #808080,inset 2px 2px #D4D0C8;"></div>
<svg style="left:1087px;top:398px" width="7" height="4" shape-rendering="crispEdges"><g fill="#000"><rect x="0" y="0" width="7" height="1"/><rect x="1" y="1" width="5" height="1"/><rect x="2" y="2" width="3" height="1"/><rect x="3" y="3" width="1" height="1"/></g></svg>
<span style="right:192px;top:257px;font-size:11px;font-weight:400;color:#000;letter-spacing:-0.1px;">Tipo</span>
<div style="left:1206px;top:252px;width:125px;height:21px;background:#fff;box-shadow:inset 1px 1px #808080,inset -1px -1px #fff,inset 2px 2px #404040,inset -2px -2px #D4D0C8;"></div>
<div style="left:1313px;top:254px;width:16px;height:17px;background:#D4D0C8;box-shadow:inset -1px -1px #404040,inset 1px 1px #fff,inset -2px -2px #808080,inset 2px 2px #D4D0C8;"></div>
<svg style="left:1318px;top:261px" width="7" height="4" shape-rendering="crispEdges"><g fill="#000"><rect x="0" y="0" width="7" height="1"/><rect x="1" y="1" width="5" height="1"/><rect x="2" y="2" width="3" height="1"/><rect x="3" y="3" width="1" height="1"/></g></svg>
<div style="left:1209px;top:255px;width:104px;height:15px;background:#0A246A;background-clip:padding-box;border:1px dotted #000;box-sizing:border-box"></div>
<span style="left:1210px;top:256px;font-size:11px;font-weight:400;color:#fff;letter-spacing:-0.2px;">Bonificação</span>
<div style="left:1180px;top:247px;width:151px;height:26px;border:1px solid #E03838;box-sizing:border-box"></div>
<span style="right:192px;top:280px;font-size:11px;font-weight:400;color:#000;letter-spacing:-0.1px;">Conferência</span>
<div style="left:1206px;top:275px;width:126px;height:21px;background:#fff;box-shadow:inset 1px 1px #808080,inset -1px -1px #fff,inset 2px 2px #404040,inset -2px -2px #D4D0C8;"></div>
<span style="left:1210px;top:280px;font-size:11px;font-weight:400;color:#000;letter-spacing:0px;">Todos</span>
<div style="left:1314px;top:277px;width:16px;height:17px;background:#D4D0C8;box-shadow:inset -1px -1px #404040,inset 1px 1px #fff,inset -2px -2px #808080,inset 2px 2px #D4D0C8;"></div>
<svg style="left:1319px;top:283px" width="7" height="4" shape-rendering="crispEdges"><g fill="#000"><rect x="0" y="0" width="7" height="1"/><rect x="1" y="1" width="5" height="1"/><rect x="2" y="2" width="3" height="1"/><rect x="3" y="3" width="1" height="1"/></g></svg>
<span style="right:192px;top:303px;font-size:11px;font-weight:400;color:#000;letter-spacing:-0.1px;">Valor Final</span>
<div style="left:1206px;top:298px;width:127px;height:21px;background:#fff;box-shadow:inset 1px 1px #808080,inset -1px -1px #fff,inset 2px 2px #404040,inset -2px -2px #D4D0C8;"></div>
<span style="right:64px;top:303px;font-size:11px;font-weight:400;color:#000;letter-spacing:0px;">0,00</span>
<span style="right:192px;top:349px;font-size:11px;font-weight:400;color:#000;letter-spacing:-0.1px;">Até</span>
<div style="left:1206px;top:344px;width:127px;height:21px;background:#fff;box-shadow:inset 1px 1px #808080,inset -1px -1px #fff,inset 2px 2px #404040,inset -2px -2px #D4D0C8;"></div>
<span style="right:192px;top:372px;font-size:11px;font-weight:400;color:#000;letter-spacing:-0.1px;">Até</span>
<div style="left:1206px;top:367px;width:127px;height:21px;background:#fff;box-shadow:inset 1px 1px #808080,inset -1px -1px #fff,inset 2px 2px #404040,inset -2px -2px #D4D0C8;"></div>
<span style="left:1209px;top:372px;font-size:11px;font-weight:400;color:#000;letter-spacing:0px;">0</span>
<span style="right:192px;top:395px;font-size:11px;font-weight:400;color:#000;letter-spacing:-0.1px;">Tipo Emiss. Pedido</span>
<div style="left:1206px;top:390px;width:90px;height:21px;background:#fff;box-shadow:inset 1px 1px #808080,inset -1px -1px #fff,inset 2px 2px #404040,inset -2px -2px #D4D0C8;"></div>
<span style="left:1210px;top:395px;font-size:11px;font-weight:400;color:#000;letter-spacing:0px;">Todos</span>
<div style="left:1278px;top:392px;width:16px;height:17px;background:#D4D0C8;box-shadow:inset -1px -1px #404040,inset 1px 1px #fff,inset -2px -2px #808080,inset 2px 2px #D4D0C8;"></div>
<svg style="left:1283px;top:398px" width="7" height="4" shape-rendering="crispEdges"><g fill="#000"><rect x="0" y="0" width="7" height="1"/><rect x="1" y="1" width="5" height="1"/><rect x="2" y="2" width="3" height="1"/><rect x="3" y="3" width="1" height="1"/></g></svg>
<div style="left:941px;top:425px;width:399px;height:83px;border:1px solid #fff;box-sizing:border-box"></div>
<div style="left:940px;top:424px;width:399px;height:83px;border:1px solid #808080;box-sizing:border-box"></div>
<span style="right:375px;top:437px;font-size:11px;font-weight:400;color:#000;letter-spacing:-0.25px;">Modo Exibição</span>
<div style="left:1023px;top:432px;width:113px;height:21px;background:#fff;box-shadow:inset 1px 1px #808080,inset -1px -1px #fff,inset 2px 2px #404040,inset -2px -2px #D4D0C8;"></div>
<span style="left:1027px;top:437px;font-size:11px;font-weight:400;color:#000;letter-spacing:0px;">Sintético</span>
<div style="left:1118px;top:434px;width:16px;height:17px;background:#D4D0C8;box-shadow:inset -1px -1px #404040,inset 1px 1px #fff,inset -2px -2px #808080,inset 2px 2px #D4D0C8;"></div>
<svg style="left:1123px;top:440px" width="7" height="4" shape-rendering="crispEdges"><g fill="#000"><rect x="0" y="0" width="7" height="1"/><rect x="1" y="1" width="5" height="1"/><rect x="2" y="2" width="3" height="1"/><rect x="3" y="3" width="1" height="1"/></g></svg>
<span style="right:375px;top:462px;font-size:11px;font-weight:400;color:#000;letter-spacing:-0.25px;">Agrupamento</span>
<div style="left:1023px;top:457px;width:113px;height:21px;background:#fff;box-shadow:inset 1px 1px #808080,inset -1px -1px #fff,inset 2px 2px #404040,inset -2px -2px #D4D0C8;"></div>
<span style="left:1027px;top:462px;font-size:11px;font-weight:400;color:#000;letter-spacing:-0.25px;">Sem Agrupamento</span>
<div style="left:1118px;top:459px;width:16px;height:17px;background:#D4D0C8;box-shadow:inset -1px -1px #404040,inset 1px 1px #fff,inset -2px -2px #808080,inset 2px 2px #D4D0C8;"></div>
<svg style="left:1123px;top:465px" width="7" height="4" shape-rendering="crispEdges"><g fill="#000"><rect x="0" y="0" width="7" height="1"/><rect x="1" y="1" width="5" height="1"/><rect x="2" y="2" width="3" height="1"/><rect x="3" y="3" width="1" height="1"/></g></svg>
<span style="right:192px;top:436px;font-size:11px;font-weight:400;color:#000;letter-spacing:-0.1px;">Mostrar</span>
<div style="left:1206px;top:432px;width:126px;height:21px;background:#fff;box-shadow:inset 1px 1px #808080,inset -1px -1px #fff,inset 2px 2px #404040,inset -2px -2px #D4D0C8;"></div>
<span style="left:1210px;top:437px;font-size:11px;font-weight:400;color:#000;letter-spacing:0px;">Produto Sintético</span>
<div style="left:1314px;top:434px;width:16px;height:17px;background:#D4D0C8;box-shadow:inset -1px -1px #404040,inset 1px 1px #fff,inset -2px -2px #808080,inset 2px 2px #D4D0C8;"></div>
<svg style="left:1319px;top:440px" width="7" height="4" shape-rendering="crispEdges"><g fill="#000"><rect x="0" y="0" width="7" height="1"/><rect x="1" y="1" width="5" height="1"/><rect x="2" y="2" width="3" height="1"/><rect x="3" y="3" width="1" height="1"/></g></svg>
<div style="left:786px;top:521px;width:100px;height:25px;background:#D4D0C8;box-shadow:inset -1px -1px #404040,inset 1px 1px #fff,inset -2px -2px #808080,inset 2px 2px #D4D0C8;"></div>
<div style="left:892px;top:521px;width:100px;height:25px;background:#D4D0C8;box-shadow:inset -1px -1px #404040,inset 1px 1px #fff,inset -2px -2px #808080,inset 2px 2px #D4D0C8;"></div>
<div style="left:998px;top:521px;width:100px;height:25px;background:#D4D0C8;box-shadow:inset -1px -1px #404040,inset 1px 1px #fff,inset -2px -2px #808080,inset 2px 2px #D4D0C8;"></div>
<span style="left:829px;top:528px;font-size:11px;font-weight:400;color:#000;letter-spacing:-0.4px;">Imprimir</span>
<span style="left:930px;top:528px;font-size:11px;font-weight:400;color:#000;letter-spacing:-0.4px;">Visualizar</span>
<span style="left:1036px;top:528px;font-size:11px;font-weight:400;color:#000;letter-spacing:-0.4px;">Cancelar</span>
<div style="left:808px;top:525px;width:18px;height:18px"><svg width="18" height="18" viewBox="0 0 18 18"><path d="M4.5 1.5 H10 L12.5 4 V9 H4.5 Z" fill="#E8E8E8" stroke="#000"/><path d="M6 4 H8 M6 6 H10" stroke="#000"/><path d="M1.5 9.5 H16.5 V15.5 H1.5 Z" fill="#D4D0C8" stroke="#000"/><path d="M1.5 12.5 H16.5" stroke="#000"/><path d="M3 11 H13" stroke="#A0A0A0"/><rect x="14" y="10.5" width="1.5" height="1" fill="#d00"/></svg></div>
<div style="left:909px;top:525px;width:18px;height:18px"><svg width="18" height="18" viewBox="0 0 18 18"><path d="M4.5 1.5 H12.5 C14 1.5 15 2.5 15 4 V8.5 H3 V3 C3 2 3.5 1.5 4.5 1.5 Z" fill="#E0E0E0" stroke="#000"/><path d="M6 4.5 H11 M6 6.5 H10" stroke="#000"/><path d="M1.5 8.5 H16.5 V13.5 H1.5 Z" fill="#D4D0C8" stroke="#000"/><path d="M2.5 13.5 V16.5 H15.5 V13.5" fill="#D4D0C8" stroke="#000"/><path d="M4 10.5 H14 M4 15 H12" stroke="#000"/><circle cx="13.5" cy="14.5" r="1.3" fill="none" stroke="#000" stroke-width=".8"/><rect x="0.5" y="6" width="2" height="3" fill="#c00"/><rect x="15.5" y="6" width="2" height="3" fill="#c00"/></svg></div>
<div style="left:1015px;top:525px;width:18px;height:18px"><svg width="18" height="18" viewBox="0 0 18 18"><circle cx="9" cy="9" r="6.5" fill="none" stroke="#E01010" stroke-width="2"/><path d="M4.5 13.5 L13.5 4.5" stroke="#E01010" stroke-width="2"/></svg></div>
<div style="left:218px;top:37px;width:159px;height:431px;background:#D4D0C8;box-shadow:inset -1px -1px #404040,inset 1px 1px #D4D0C8,inset -2px -2px #808080,inset 2px 2px #fff;box-shadow:inset -1px -1px #404040,inset 1px 1px #D4D0C8,inset -2px -2px #808080,inset 2px 2px #fff,2px 2px 2px rgba(0,0,0,.35)"></div>
<span style="left:237px;top:42px;font-size:11px;font-weight:400;color:#000;letter-spacing:-0.1px;">Bairros</span>
<span style="left:237px;top:59px;font-size:11px;font-weight:400;color:#000;letter-spacing:-0.1px;">Cidades</span>
<span style="left:237px;top:76px;font-size:11px;font-weight:400;color:#000;letter-spacing:-0.1px;">Cheques</span>
<div style="left:365px;top:78px;width:0;height:0;border-top:3.5px solid transparent;border-bottom:3.5px solid transparent;border-left:4px solid #000"></div>
<span style="left:237px;top:93px;font-size:11px;font-weight:400;color:#000;letter-spacing:-0.1px;">Clientes</span>
<div style="left:365px;top:95px;width:0;height:0;border-top:3.5px solid transparent;border-bottom:3.5px solid transparent;border-left:4px solid #000"></div>
<span style="left:237px;top:110px;font-size:11px;font-weight:400;color:#000;letter-spacing:-0.1px;">Contábeis</span>
<div style="left:365px;top:112px;width:0;height:0;border-top:3.5px solid transparent;border-bottom:3.5px solid transparent;border-left:4px solid #000"></div>
<span style="left:237px;top:127px;font-size:11px;font-weight:400;color:#000;letter-spacing:-0.1px;">Desempenhos</span>
<div style="left:365px;top:129px;width:0;height:0;border-top:3.5px solid transparent;border-bottom:3.5px solid transparent;border-left:4px solid #000"></div>
<span style="left:237px;top:144px;font-size:11px;font-weight:400;color:#000;letter-spacing:-0.1px;">Despesas Vendedores</span>
<span style="left:237px;top:161px;font-size:11px;font-weight:400;color:#000;letter-spacing:-0.1px;">DRE</span>
<span style="left:237px;top:178px;font-size:11px;font-weight:400;color:#000;letter-spacing:-0.1px;">Financeiro</span>
<div style="left:365px;top:180px;width:0;height:0;border-top:3.5px solid transparent;border-bottom:3.5px solid transparent;border-left:4px solid #000"></div>
<span style="left:237px;top:195px;font-size:11px;font-weight:400;color:#000;letter-spacing:-0.1px;">Fornecedores</span>
<span style="left:237px;top:212px;font-size:11px;font-weight:400;color:#000;letter-spacing:-0.1px;">Funcionários</span>
<span style="left:237px;top:229px;font-size:11px;font-weight:400;color:#000;letter-spacing:-0.1px;">Integrações Importadas</span>
<span style="left:237px;top:246px;font-size:11px;font-weight:400;color:#000;letter-spacing:-0.1px;">Manifestos</span>
<span style="left:237px;top:263px;font-size:11px;font-weight:400;color:#000;letter-spacing:-0.1px;">Montar Relatórios</span>
<span style="left:237px;top:280px;font-size:11px;font-weight:400;color:#000;letter-spacing:-0.1px;">Notas Fiscais - Compras</span>
<div style="left:365px;top:282px;width:0;height:0;border-top:3.5px solid transparent;border-bottom:3.5px solid transparent;border-left:4px solid #000"></div>
<span style="left:237px;top:297px;font-size:11px;font-weight:400;color:#000;letter-spacing:-0.1px;">Notas Fiscais - Venda</span>
<div style="left:365px;top:299px;width:0;height:0;border-top:3.5px solid transparent;border-bottom:3.5px solid transparent;border-left:4px solid #000"></div>
<span style="left:237px;top:314px;font-size:11px;font-weight:400;color:#000;letter-spacing:-0.1px;">Orçamentos</span>
<span style="left:237px;top:331px;font-size:11px;font-weight:400;color:#000;letter-spacing:-0.1px;">Ordens de Compra</span>
<div style="left:221px;top:346px;width:153px;height:17px;background:#0A246A;"></div>
<span style="left:237px;top:348px;font-size:11px;font-weight:400;color:#fff;letter-spacing:-0.1px;">Pedidos</span>
<div style="left:365px;top:350px;width:0;height:0;border-top:3.5px solid transparent;border-bottom:3.5px solid transparent;border-left:4px solid #fff"></div>
<span style="left:237px;top:365px;font-size:11px;font-weight:400;color:#000;letter-spacing:-0.1px;">Produtos</span>
<div style="left:365px;top:367px;width:0;height:0;border-top:3.5px solid transparent;border-bottom:3.5px solid transparent;border-left:4px solid #000"></div>
<span style="left:237px;top:382px;font-size:11px;font-weight:400;color:#000;letter-spacing:-0.1px;">Promoções</span>
<span style="left:237px;top:399px;font-size:11px;font-weight:400;color:#000;letter-spacing:-0.1px;">Rotas</span>
<span style="left:237px;top:416px;font-size:11px;font-weight:400;color:#000;letter-spacing:-0.1px;">Situações de Pedidos</span>
<span style="left:237px;top:433px;font-size:11px;font-weight:400;color:#000;letter-spacing:-0.1px;">Transportadoras</span>
<span style="left:237px;top:450px;font-size:11px;font-weight:400;color:#000;letter-spacing:-0.1px;">Veículos</span>
<div style="left:365px;top:452px;width:0;height:0;border-top:3.5px solid transparent;border-bottom:3.5px solid transparent;border-left:4px solid #000"></div>
<div style="left:372px;top:343px;width:159px;height:193px;background:#D4D0C8;box-shadow:inset -1px -1px #404040,inset 1px 1px #D4D0C8,inset -2px -2px #808080,inset 2px 2px #fff;box-shadow:inset -1px -1px #404040,inset 1px 1px #D4D0C8,inset -2px -2px #808080,inset 2px 2px #fff,2px 2px 2px rgba(0,0,0,.35)"></div>
<span style="left:391px;top:348px;font-size:11px;font-weight:400;color:#000;letter-spacing:-0.15px;">Conferência de Pedidos</span>
<span style="left:391px;top:365px;font-size:11px;font-weight:400;color:#000;letter-spacing:-0.15px;">Corte de Pedidos</span>
<span style="left:391px;top:382px;font-size:11px;font-weight:400;color:#000;letter-spacing:-0.15px;">Expedição Pedidos</span>
<span style="left:391px;top:399px;font-size:11px;font-weight:400;color:#000;letter-spacing:-0.15px;">Flex</span>
<div style="left:375px;top:414px;width:153px;height:17px;background:#0A246A;"></div>
<span style="left:391px;top:416px;font-size:11px;font-weight:400;color:#fff;letter-spacing:-0.15px;">Pedidos</span>
<span style="left:391px;top:433px;font-size:11px;font-weight:400;color:#000;letter-spacing:-0.15px;">Pedidos a Produzir</span>
<span style="left:391px;top:450px;font-size:11px;font-weight:400;color:#000;letter-spacing:-0.15px;">Pedidos Custos</span>
<span style="left:391px;top:467px;font-size:11px;font-weight:400;color:#000;letter-spacing:-0.15px;">Pedidos por Item</span>
<span style="left:391px;top:484px;font-size:11px;font-weight:400;color:#000;letter-spacing:-0.15px;">Rentabilidade do Pedido</span>
<span style="left:391px;top:501px;font-size:11px;font-weight:400;color:#000;letter-spacing:-0.15px;">Saldo dos Pedidos</span>
<span style="left:391px;top:518px;font-size:11px;font-weight:400;color:#000;letter-spacing:-0.15px;">Sugestão de Pedidos</span>
<svg style="left:3px;top:72px" width="34" height="34" viewBox="0 0 34 34"><defs><radialGradient id="fc0" cx="50%" cy="40%" r="60%"><stop offset="0" stop-color="#EAD8B8"/><stop offset="1" stop-color="#B09070"/></radialGradient>
<linearGradient id="st0" x1="0" y1="0" x2="0" y2="1"><stop offset="0" stop-color="#4a4a4a"/><stop offset="1" stop-color="#151515"/></linearGradient></defs>
<path d="M3 28 C3 22 6 19.5 11 18.5 L21 18.5 C26 19.5 29 22 29 28 C29 32 28 33 26 33 L6 33 C4 33 3 32 3 28 Z" fill="url(#st0)"/>
<path d="M12 19 L20 19 L19.5 33 L12.5 33 Z" fill="#f2f2f2"/>
<path d="M15 20 L17 20 L17.5 31 L16 33 L14.5 31 Z" fill="#111"/>
<ellipse cx="16" cy="13" rx="6" ry="6.2" fill="url(#fc0)"/>
<path d="M9 11 C8 4 12 1.5 16 1.5 C20 1.5 24 4 23 11 C22 9 21 8 19.5 8.5 C18 9.5 14 9.5 12.5 8.5 C11 8 10 9 9 11 Z" fill="#1c1c1c"/></svg>
<svg style="left:3px;top:110px" width="34" height="34" viewBox="0 0 34 34"><path d="M6 29 C5 22 7 18.5 11 17.5 L21 17.5 C25 18.5 27 22 26 29 Z" fill="#C88020"/>
<path d="M10.5 18 L21.5 18 L21 28 L11 28 Z" fill="#1a1a1a"/>
<path d="M13.5 18 L16 21 L18.5 18 Z" fill="#fff"/><circle cx="16" cy="21" r="1.1" fill="#d03030"/><circle cx="20" cy="23" r="1" fill="#e0c0d0"/>
<ellipse cx="16" cy="11.5" rx="6" ry="6.5" fill="#F8E0B0"/>
<path d="M10 11 C9.5 4 13 3 16 3 C19 3 22.5 4 22 11 C21 8 19 7 16 7 C13 7 11 8 10 11 Z" fill="#111"/>
<rect x="6" y="27.5" width="20" height="2.5" fill="#f4f4f8"/>
<circle cx="10" cy="26" r="2.2" fill="#F8E0B0"/><circle cx="22" cy="26" r="2.2" fill="#F8E0B0"/></svg>
<svg style="left:3px;top:148px" width="34" height="34" viewBox="0 0 34 34"><path d="M13 10 L22 6 L31 10 L30 27 L21 32 L13 28 Z" fill="#CDB58C"/>
<path d="M13 10 L22 6 L31 10 L22 14 Z" fill="#E6D4AE"/><path d="M22 14 L31 10 L30 27 L21 32 Z" fill="#BCA078"/>
<path d="M23.5 16 L28 14.5 L27 20 L25.5 21 L25.5 26 L24.5 26.5 L24.5 21.5 Z" fill="#505050"/>
<path d="M3 12 C3 9 4 8 5 7 L12 7 C13 8 14 9 14 12 L14 30 C14 32 13 33 11 33 L6 33 C4 33 3 32 3 30 Z" fill="#E4F0FA"/>
<rect x="5" y="2" width="7" height="5" rx="1" fill="#3A80D0"/>
<rect x="3" y="15" width="11" height="7" fill="#78B8E0"/>
<path d="M5 10 V30" stroke="#fff" stroke-width="1.5"/></svg>
<svg style="left:3px;top:186px" width="34" height="34" viewBox="0 0 34 34"><path d="M2 9 L16 3 L30 9 L30 25 L16 31 L2 25 Z" fill="#C8AE84" stroke="#8C7450" stroke-width=".8"/>
<path d="M2 9 L16 3 L30 9 L16 15 Z" fill="#E0CCA2"/><path d="M16 15 L30 9 L30 25 L16 31 Z" fill="#B8996C"/>
<path d="M8 6.5 L22 12.5 L22 28 L19 29.5 L19 13.5 L5 7.8 Z" fill="#A88C60" opacity=".6"/>
<path d="M22 17 L24 16 L24 21 L26 20 L23 25 L20 22 L22 21 Z" fill="#7A6040"/></svg>
<svg style="left:3px;top:224px" width="34" height="34" viewBox="0 0 34 34"><path d="M11 5 L29 10 L32 14 L29 26 L25 27 L13 20 Z" fill="#30A030"/>
<path d="M12 8 L28 12 L30 14 L27 26 L24 27 Z" fill="#70D050"/>
<path d="M3 13 L18 11 L25 26 L10 29 Z" fill="#F8F2D8" stroke="#D8C898" stroke-width=".6"/>
<path d="M3 13 L17 11 L17.5 15 L5 17 Z" fill="#F0C040"/><path d="M6 14.5 L16 13 L16.5 15.5 L6.5 17 Z" fill="#50A0D8"/>
<g fill="#E8B040"><rect x="9" y="19" width="2.2" height="1.6"/><rect x="12.5" y="18.5" width="2.2" height="1.6"/><rect x="16" y="18" width="2.2" height="1.6"/><rect x="10" y="22" width="2.2" height="1.6"/><rect x="13.5" y="21.5" width="2.2" height="1.6"/><rect x="17" y="21" width="2.2" height="1.6"/><rect x="11" y="25" width="2.2" height="1.6"/><rect x="14.5" y="24.5" width="2.2" height="1.6"/><rect x="18" y="24" width="2.2" height="1.6"/></g></svg>
<svg style="left:3px;top:262px" width="34" height="34" viewBox="0 0 34 34"><ellipse cx="10" cy="16" rx="8" ry="9" fill="#EEEEF0"/><ellipse cx="19" cy="12" rx="6.5" ry="8" fill="#E8E8EC"/>
<path d="M12.5 14 C12.5 12 7.5 12 7.5 14.5 C7.5 17 12.5 16.5 12.5 19.5 C12.5 22 7.5 22 7.5 19.5 M10 11 V23" fill="none" stroke="#E8A010" stroke-width="2.3"/>
<path d="M21 12.5 C21 11 17 11 17 13 C17 15 21 14.5 21 17 C21 19 17 19 17 17 M19 9.5 V20.5" fill="none" stroke="#E8A818" stroke-width="2"/>
<ellipse cx="11" cy="27" rx="6" ry="3.5" fill="#F4B820"/><ellipse cx="9" cy="30" rx="5" ry="2.8" fill="#F0B010"/><ellipse cx="15" cy="30.5" rx="4.5" ry="2.5" fill="#F8C840"/>
<path d="M18 19 L30 22 L28 30 L16 27 Z" fill="#E8F4F8"/><path d="M20 20.5 L23 21.5 L22 23 Z M25 24 L28 25 L27 26.5 Z M19 25 L22 26 L21 27.5 Z" fill="#206060"/></svg>
<svg style="left:3px;top:300px" width="34" height="34" viewBox="0 0 34 34"><path d="M13 14 L20 7 L33 9 L28 17" fill="none" stroke="#707070" stroke-width="1"/><path d="M21 7.2 L30 8.5" stroke="#E07070" stroke-width="2.5"/>
<path d="M3 18 L18 13 L35 15 L20 21 Z" fill="#F0C850"/>
<path d="M3 18 L20 21 L20 32 L7 31 Z" fill="#F8E070"/>
<path d="M20 21 L35 15 L31 28 L20 32 Z" fill="#E8A828"/>
<g stroke="#C09020" stroke-width=".9"><path d="M7 22 L8 29 M10 22.5 L11 30 M13 23 L13.5 30.5 M16 23.5 L16.5 31"/></g></svg>
<svg style="left:3px;top:338px" width="34" height="34" viewBox="0 0 34 34"><path d="M3 10 L21 8 L21 22 L5 25 Z" fill="#9A5A28"/>
<path d="M4 6 L21 4 L21.5 12 L5 14 Z" fill="#80CC40"/>
<path d="M4 5 L21 3 L21 6.5 L4 8.5 Z" fill="#A8D8F0"/>
<path d="M3 12 L21 10 L21 13 L3 15 Z" fill="#9A5A28"/>
<path d="M21 6 L27 10 L27.5 28 L21 22 Z" fill="#A86030"/><path d="M22 12 L26.5 14.5" stroke="#D0E0F0" stroke-width="1"/>
<ellipse cx="12" cy="27" rx="3.5" ry="2.5" fill="#F4C030"/><ellipse cx="17" cy="29" rx="3.5" ry="2.5" fill="#F8CC40"/><ellipse cx="24" cy="30" rx="3" ry="2.2" fill="#F0C030"/><ellipse cx="15" cy="32" rx="3" ry="1.8" fill="#F4C838"/></svg>
<svg style="left:3px;top:376px" width="34" height="34" viewBox="0 0 34 34"><path d="M4 4 L24 4 L28 8 L28 31 L4 31 Z" fill="#F8F8FA" stroke="#B8B8C0" stroke-width=".8"/>
<path d="M24 4 L24 8 L28 8 Z" fill="#E0E0EA"/>
<path d="M20.5 11 C19 9 12 8.5 12 13 C12 17.5 20.5 16 20.5 21.5 C20.5 26 13 26 11.5 23.5 M16 7.5 V28" fill="none" stroke="#10A020" stroke-width="2.6"/></svg>
<svg style="left:3px;top:414px" width="34" height="34" viewBox="0 0 34 34"><g transform="translate(1,2) scale(0.92)"><path d="M2 20 L9 16.5 L19 14.5 L29 12.5 L34 15 L34 21 L21 25.5 L10 27 L3 24.5 Z" fill="#D02828"/>
<path d="M3 21 L11 19 L21 18 L33 15.5 L33 17 L21 20 L10 22 L3 23 Z" fill="#E85050" opacity=".7"/>
<path d="M13 16 L20 11.5 L29 12.5 L24 16.5 Z" fill="#505868"/>
<rect x="11" y="20.5" width="3" height="1.5" fill="#fff" opacity=".8"/>
<circle cx="17" cy="24" r="3" fill="#222"/><circle cx="17" cy="24" r="1.5" fill="#ccc"/>
<circle cx="31" cy="19.5" r="2.5" fill="#222"/><circle cx="31" cy="19.5" r="1.2" fill="#ccc"/></g></svg>
<svg style="left:3px;top:452px" width="34" height="34" viewBox="0 0 34 34"><path d="M2 9 L16 3 L30 9 L30 25 L16 31 L2 25 Z" fill="#C8AE84" stroke="#8C7450" stroke-width=".8"/>
<path d="M2 9 L16 3 L30 9 L16 15 Z" fill="#E0CCA2"/><path d="M16 15 L30 9 L30 25 L16 31 Z" fill="#B8996C"/>
<path d="M8 6.5 L22 12.5 L22 28 L19 29.5 L19 13.5 L5 7.8 Z" fill="#A88C60" opacity=".6"/>
<path d="M22 17 L24 16 L24 21 L26 20 L23 25 L20 22 L22 21 Z" fill="#7A6040"/></svg>
<svg style="left:3px;top:490px" width="34" height="34" viewBox="0 0 34 34"><ellipse cx="18" cy="33" rx="9" ry="1.2" fill="#000" opacity=".12"/>
<path d="M22 23 L30 31" stroke="#303030" stroke-width="4.2" stroke-linecap="round"/>
<circle cx="13" cy="15" r="10" fill="#D8EEF8" stroke="#FAFAFA" stroke-width="1.6"/><circle cx="13" cy="15" r="10.8" fill="none" stroke="#90A8B8" stroke-width=".6"/>
<path d="M16.5 9.5 C15.5 8 11 8 11 11 C11 14 16 13.5 16 17 C16 20 11.5 20 10.5 18 M13.5 7 V22" fill="none" stroke="#107020" stroke-width="2.2"/></svg>
<svg style="left:3px;top:528px" width="34" height="34" viewBox="0 0 34 34"><defs><radialGradient id="pw" cx="50%" cy="45%" r="55%"><stop offset="0" stop-color="#E83838"/><stop offset=".75" stop-color="#D02828"/><stop offset="1" stop-color="#F07070"/></radialGradient></defs>
<circle cx="16" cy="17" r="15" fill="url(#pw)" stroke="#B82020" stroke-width=".8"/>
<path d="M10 11 A8.5 8.5 0 1 0 22 11" fill="none" stroke="#fff" stroke-width="3.4"/>
<path d="M16 5.5 L16 17" stroke="#fff" stroke-width="3"/></svg>
<svg style="left:0;top:0" width="230" height="70" viewBox="0 0 230 70"><g transform="translate(1,1)" stroke="#fff" fill="none" stroke-width="1"><path d="M18.5 49 V57 M28.5 49 L22 53 L28.5 57 Z"/><path d="M73.5 49 L64.5 53.5 L73.5 57.5 Z"/><path d="M109.5 49 L117.5 53 L109.5 57 Z"/><path d="M154.5 49 L161.5 53 L154.5 57 Z M162.5 49 V57"/><path d="M207 49.5 C205 48 202 48 200.5 49.5 C198.5 51.5 198.5 55.5 200.5 57.5 C202 59 204 59 205.5 58" fill="none"/><path d="M208.5 48.5 V53.5 H203.5"/><path d="M205.5 58.5 C204 57 203.5 55 204.5 53.5" fill="none"/></g><g stroke="#808080" fill="none" stroke-width="1"><path d="M18.5 49 V57 M28.5 49 L22 53 L28.5 57 Z"/><path d="M73.5 49 L64.5 53.5 L73.5 57.5 Z"/><path d="M109.5 49 L117.5 53 L109.5 57 Z"/><path d="M154.5 49 L161.5 53 L154.5 57 Z M162.5 49 V57"/><path d="M207 49.5 C205 48 202 48 200.5 49.5 C198.5 51.5 198.5 55.5 200.5 57.5 C202 59 204 59 205.5 58" fill="none"/><path d="M208.5 48.5 V53.5 H203.5"/><path d="M205.5 58.5 C204 57 203.5 55 204.5 53.5" fill="none"/></g></svg>
<svg style="left:680px;top:553px" width="220" height="14" viewBox="680 553 220 14"><g fill="#fff"><path d="M691.5 553 L713 553 L711 564 L694 564 Z"/><path d="M730 553 L752 553 L749.5 564 L732.5 564 Z"/><path d="M757 553 L771 553 L768 564 L755 564 Z"/><path d="M788 553 L809 553 L807 564 L791 564 Z"/><path d="M826 553 L839.5 553 L842 564 L829.5 564 Z"/><path d="M844 553 L876 553 L876 565 L862 565 C853 565 847 560 844 553 Z"/></g></svg>
<div style="left:895px;top:553px;width:5px;height:1px;background:rgba(200,205,230,.35);"></div>
<div style="left:903px;top:553px;width:5px;height:1px;background:rgba(200,205,230,.35);"></div>
<div style="left:942px;top:553px;width:5px;height:1px;background:rgba(200,205,230,.35);"></div>
<div style="left:992px;top:553px;width:5px;height:1px;background:rgba(200,205,230,.35);"></div>
<div style="left:1032px;top:553px;width:5px;height:1px;background:rgba(200,205,230,.35);"></div>
</body></html>
